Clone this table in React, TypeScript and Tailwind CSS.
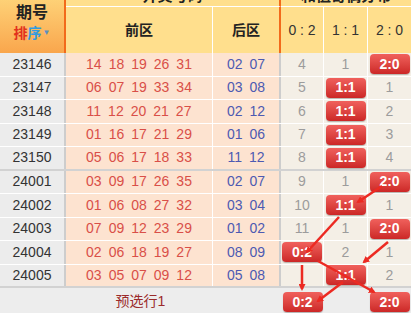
import type { ReactNode } from 'react'

const font = { fontFamily: '"Liberation Sans", "Noto Sans CJK SC", sans-serif' }

type Cell = string | number

const rows: { no: string; front: string[]; back: string[]; dist: Cell[]; sep?: boolean }[] = [
  { no: '23146', front: ['14', '18', '19', '26', '31'], back: ['02', '07'], dist: [4, 1, '2:0'] },
  { no: '23147', front: ['06', '07', '19', '33', '34'], back: ['03', '08'], dist: [5, '1:1', 1] },
  { no: '23148', front: ['11', '12', '20', '21', '27'], back: ['02', '12'], dist: [6, '1:1', 2] },
  { no: '23149', front: ['01', '16', '17', '21', '29'], back: ['01', '06'], dist: [7, '1:1', 3] },
  { no: '23150', front: ['05', '06', '17', '18', '33'], back: ['11', '12'], dist: [8, '1:1', 4], sep: true },
  { no: '24001', front: ['03', '09', '17', '26', '35'], back: ['02', '07'], dist: [9, 1, '2:0'] },
  { no: '24002', front: ['01', '06', '08', '27', '32'], back: ['03', '04'], dist: [10, '1:1', 1] },
  { no: '24003', front: ['07', '09', '12', '23', '29'], back: ['01', '02'], dist: [11, 1, '2:0'] },
  { no: '24004', front: ['02', '06', '18', '19', '27'], back: ['08', '09'], dist: ['0:2', 2, 1] },
  { no: '24005', front: ['03', '05', '07', '09', '12'], back: ['05', '08'], dist: ['', '1:1', 2], sep: true },
]

function Badge({ children }: { children: ReactNode }) {
  return (
    <span className="flex h-[20px] w-[40px] items-center justify-center rounded-[4px] bg-gradient-to-b from-[#f0605c] to-[#cc2626] text-[14px] font-bold text-white shadow-[0_1px_1px_rgba(0,0,0,0.25)]">
      {children}
    </span>
  )
}

function DistCell({ value, last }: { value: Cell; last?: boolean }) {
  const isBadge = typeof value === 'string' && value.includes(':')
  return (
    <div
      className={`flex items-center justify-center text-[14px] text-[#9c9c9c] ${last ? '' : 'border-r border-white'}`}
    >
      {isBadge ? <Badge>{value}</Badge> : value}
    </div>
  )
}

function Arrows() {
  const lines: [number, number, number, number][] = [
    [382, 186, 358, 202],
    [339, 217, 307, 252],
    [388, 242, 364, 262],
    [302, 265, 302, 289],
    [318, 261, 374, 292],
    [343, 282, 318, 301],
  ]
  return (
    <svg className="pointer-events-none absolute left-0 top-0" width="411" height="313">
      <defs>
        <marker id="ah" markerWidth="7" markerHeight="7" refX="5" refY="3.5" orient="auto" markerUnits="userSpaceOnUse">
          <path d="M0,0 L7,3.5 L0,7 Z" fill="#ec2a22" />
        </marker>
      </defs>
      {lines.map(([x1, y1, x2, y2], i) => (
        <line
          key={i}
          x1={x1}
          y1={y1}
          x2={x2}
          y2={y2}
          stroke="#ec2a22"
          strokeWidth="2.5"
          markerEnd="url(#ah)"
        />
      ))}
    </svg>
  )
}

export default function App() {
  return (
    <div className="relative h-[313px] w-[411px] overflow-hidden bg-white" style={font}>
      {/* header */}
      <div className="-mt-[13px] grid grid-cols-[66px_147px_68px_43px_44px_43px] grid-rows-[20px_46px] bg-[#ffdf8d]">
        <div className="row-span-2 flex flex-col items-center justify-end border-r-2 border-[#f26a1b] bg-gradient-to-b from-[#fedb80] to-[#f9a64c] pb-[11px]">
          <span className="text-[16px] font-bold leading-[20px] text-[#222]">期号</span>
          <span className="mt-[1px] flex items-center text-[14px] font-bold leading-[18px]">
            <span className="text-[#e2311d]">排</span>
            <span className="text-[#2f9be0]">序</span>
            <span className="ml-[1px] text-[8px] text-[#5a8fc0]">▼</span>
          </span>
        </div>
        <div className="col-span-2 flex items-center justify-center border-b border-r-2 border-b-white border-r-[#f26a1b] text-[15px] font-bold text-[#222]">
          开奖号码
        </div>
        <div className="col-span-3 flex items-center justify-center border-b border-white text-[15px] font-bold text-[#222]">
          和值奇偶分布
        </div>
        <div className="flex items-center justify-center border-r border-white text-[14px] font-bold text-[#222]">前区</div>
        <div className="flex items-center justify-center border-r-2 border-[#f26a1b] text-[14px] font-bold text-[#222]">后区</div>
        <div className="flex items-center justify-center border-r border-white text-[14px] text-[#333]">0 : 2</div>
        <div className="flex items-center justify-center border-r border-white text-[14px] text-[#333]">1 : 1</div>
        <div className="flex items-center justify-center text-[14px] text-[#333]">2 : 0</div>
      </div>

      {/* rows */}
      {rows.map((r) => (
        <div
          key={r.no}
          className={`grid h-[23.5px] grid-cols-[66px_147px_68px_43px_44px_43px] ${r.sep ? 'border-b-2 border-[#d2d2d2]' : 'border-b border-white'}`}
        >
          <div className="flex items-center justify-center border-r-2 border-[#cdcdcd] bg-[#ececec] text-[14px] text-[#333]">
            {r.no}
          </div>
          <div className="flex items-center justify-center gap-[7px] border-r border-white bg-[#fde3d0] text-[14px] text-[#d94f48]">
            {r.front.map((n, i) => (
              <span key={i}>{n}</span>
            ))}
          </div>
          <div className="flex items-center justify-center gap-[7px] border-r-2 border-[#cdcdcd] bg-[#fde3d0] text-[14px] text-[#4d5ab2]">
            {r.back.map((n, i) => (
              <span key={i}>{n}</span>
            ))}
          </div>
          <div className="col-span-3 grid grid-cols-[43px_44px_43px] bg-[#f4efe6]">
            {r.dist.map((v, i) => (
              <DistCell key={i} value={v} last={i === 2} />
            ))}
          </div>
        </div>
      ))}

      {/* preselect row */}
      <div className="grid h-[30px] grid-cols-[281px_43px_44px_43px] bg-[#ededed]">
        <div className="flex items-start justify-center pt-[3px] text-[14px] text-[#9b2b2b]">预选行1</div>
        <div className="flex items-start justify-center pt-[4px]">
          <Badge>0:2</Badge>
        </div>
        <div />
        <div className="flex items-start justify-center pt-[4px]">
          <Badge>2:0</Badge>
        </div>
      </div>

      <Arrows />
    </div>
  )
}
